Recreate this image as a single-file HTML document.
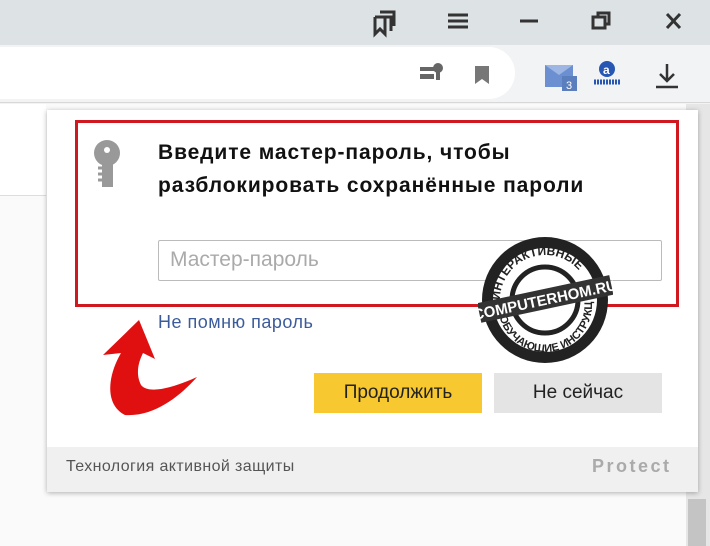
<!DOCTYPE html>
<html><head><meta charset="utf-8"><style>
*{margin:0;padding:0;box-sizing:border-box}
body{width:710px;height:546px;overflow:hidden;position:relative;background:#f3f3f3;font-family:"Liberation Sans","DejaVu Sans",sans-serif}
.top{position:absolute;left:0;top:0;width:710px;height:45px;background:#dde2e5}
.tool{position:absolute;left:0;top:45px;width:710px;height:58px;background:#f2f3f4;border-bottom:1px solid #d8d8d8}
.addr{position:absolute;left:0;top:47px;width:515px;height:52px;background:#fff;border-radius:0 26px 26px 0}
.page{position:absolute;left:0;top:104px;width:686px;height:442px;background:#fafafa}
.page2{position:absolute;left:0;top:104px;width:46px;height:92px;background:#fff;border-bottom:1px solid #ddd}
.scroll{position:absolute;left:686px;top:104px;width:24px;height:442px;background:#e6e6e6}
.scroll div{position:absolute;left:2px;top:395px;width:18px;height:47px;background:#c4c4c4}
.pop{position:absolute;left:47px;top:110px;width:651px;height:382px;background:#fff;box-shadow:0 1px 5px rgba(0,0,0,.3)}
.foot{position:absolute;left:0;bottom:0;width:100%;height:45px;background:#f0f0f0}
.red{position:absolute;left:75px;top:120px;width:604px;height:187px;border:3px solid #cf1820}
h1{position:absolute;left:158px;top:136px;font-size:21px;line-height:33px;font-weight:bold;color:#111;letter-spacing:0.9px;white-space:nowrap}
.inp{position:absolute;left:158px;top:240px;width:504px;height:41px;border:1px solid #bbb;border-radius:2px;font-size:21px;color:#aaa;padding:7px 11px}
.link{position:absolute;left:158px;top:312px;font-size:18px;color:#3b5b9a;letter-spacing:0.5px}
.b{position:absolute;top:373px;height:40px;width:168px;font-size:19px;text-align:center;line-height:40px;color:#222}
</style></head><body>
<div class="top"></div>
<svg style="position:absolute;left:0;top:0" width="710" height="104">
<g fill="none" stroke="#333" stroke-width="3">
<path d="M375 17h16v14M375 17v17l5-5 5 5v-17M380 12h14v14"/>
<path d="M448 15h20M448 21h20M448 27h20"/>
<path d="M520 21h18"/>
<rect x="593" y="17" width="12" height="11"/><path d="M598 17v-4h11v11h-4"/>
<path d="M667 14l13 14M680 14l-13 14"/>
</g>
</svg>
<div class="tool"></div><div class="addr"></div>
<svg style="position:absolute;left:0;top:45px" width="710" height="60">
<rect x="420" y="22" width="14" height="4" fill="#666"/><rect x="420" y="29" width="14" height="5" fill="#666"/>
<circle cx="438" cy="23" r="5" fill="#666"/><rect x="436" y="26" width="4" height="9" fill="#666"/>
<path d="M475 21h14v18l-7-5-7 5z" fill="#777"/>
<path d="M545 20h28v22h-28z" fill="#6b8fd0"/><path d="M545 20l14 10 14-10" fill="#9db6e3"/>
<rect x="562" y="31" width="15" height="15" fill="#5b7fbd"/><text x="566" y="44" font-size="11" fill="#fff">3</text>
<circle cx="607" cy="24" r="8" fill="#2756b3"/><text x="603" y="29" font-size="12" font-weight="bold" fill="#fff">a</text>
<path d="M594 37h27" stroke="#2756b3" stroke-width="5" stroke-dasharray="2 1"/>
<path d="M667 19v17M660 29l7 7 7-7M656 42h22" stroke="#333" stroke-width="2.5" fill="none"/>
</svg>
<div class="page"></div><div class="page2"></div>
<div class="scroll"><div></div></div>
<div class="pop"><div class="foot"></div></div>
<div class="red"></div>
<svg style="position:absolute;left:90px;top:138px" width="36" height="56">
<circle cx="17" cy="15" r="13" fill="#999"/><circle cx="17" cy="12" r="3" fill="#fff"/>
<rect x="12" y="24" width="11" height="25" fill="#999"/>
<path d="M12 30h-4M12 36h-4M12 42h-4" stroke="#999" stroke-width="3"/>
</svg>
<h1>Введите мастер-пароль, чтобы<br>разблокировать сохранённые пароли</h1>
<div class="inp">Мастер-пароль</div>
<div class="link">Не помню пароль</div>
<div class="b" style="left:314px;background:#f7c830">Продолжить</div>
<div class="b" style="left:494px;background:#e4e4e4">Не сейчас</div>
<div style="position:absolute;left:66px;top:458px;font-size:16px;color:#555;letter-spacing:0.4px">Технология активной защиты</div>
<div style="position:absolute;left:592px;top:456px;font-size:18px;font-weight:bold;color:#aaa;letter-spacing:2.5px">Protect</div>
<svg style="position:absolute;left:95px;top:315px" width="110" height="105">
<path d="M44 5 L8 40 L26 38 C12 62 10 90 30 100 C60 102 86 80 102 62 C80 72 54 80 46 70 C40 58 44 46 48 38 L60 44 Z" fill="#e01010"/>
</svg>
<svg style="position:absolute;left:478px;top:233px" width="135" height="135">
<circle cx="67" cy="67" r="63" fill="#222"/><circle cx="67" cy="67" r="52" fill="#fff"/>
<circle cx="67" cy="67" r="33" fill="none" stroke="#222" stroke-width="5"/>
<path id="c" d="M22 67a45 45 0 0 1 90 0" fill="none"/>
<text font-size="12" font-weight="bold" fill="#222"><textPath href="#c">ИНТЕРАКТИВНЫЕ</textPath></text>
<path id="c2" d="M20 72a47 47 0 0 0 94 0" fill="none"/>
<text font-size="11" font-weight="bold" fill="#222"><textPath href="#c2" startOffset="12">ОБУЧАЮЩИЕ ИНСТРУКЦИИ</textPath></text>
<g transform="rotate(-12 67 67)"><rect x="0" y="56" width="135" height="20" fill="#333"/>
<text x="67" y="72" text-anchor="middle" font-size="15" font-weight="bold" fill="#fff">COMPUTERHOM.RU</text></g>
</svg>
</body></html>
